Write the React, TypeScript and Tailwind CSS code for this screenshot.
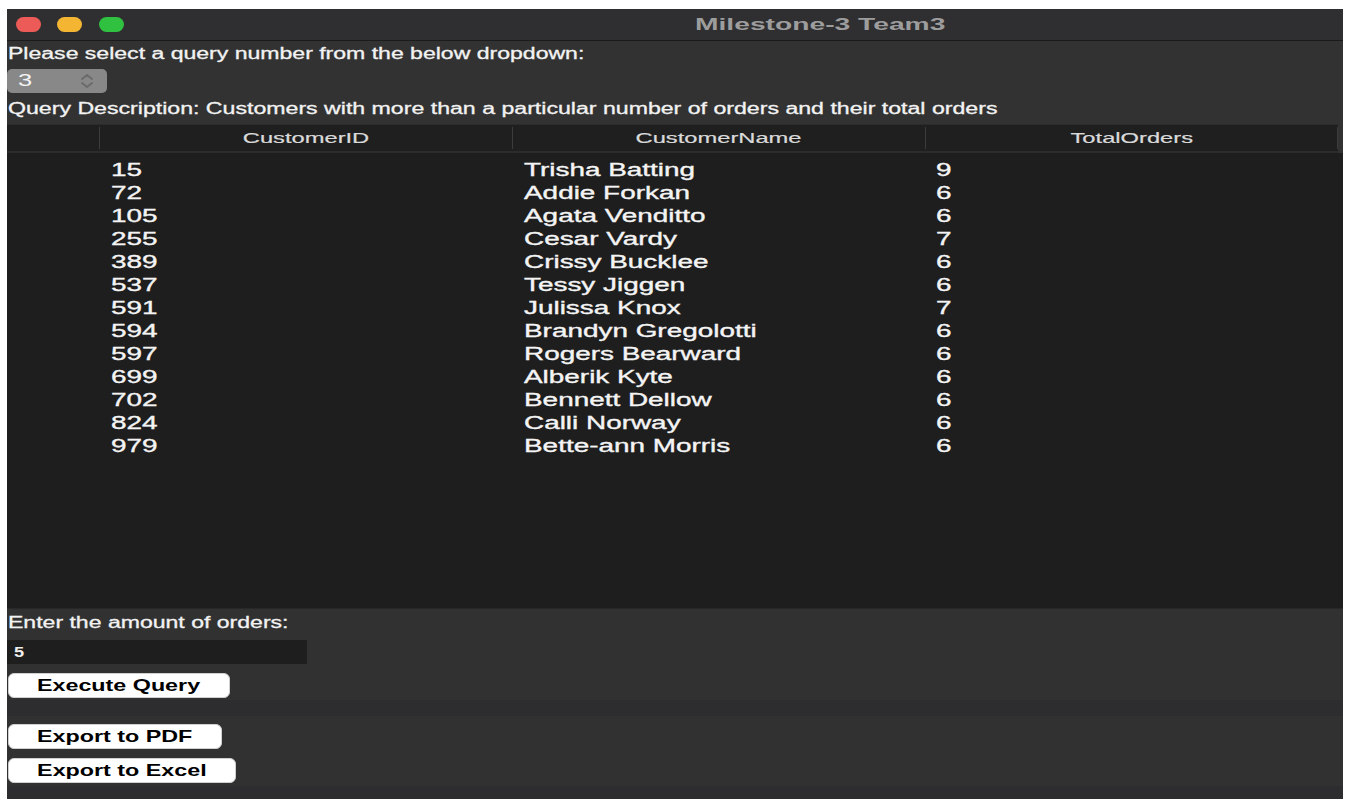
const ROWS = [
  { id: "15", name: "Trisha Batting", total: "9" },
  { id: "72", name: "Addie Forkan", total: "6" },
  { id: "105", name: "Agata Venditto", total: "6" },
  { id: "255", name: "Cesar Vardy", total: "7" },
  { id: "389", name: "Crissy Bucklee", total: "6" },
  { id: "537", name: "Tessy Jiggen", total: "6" },
  { id: "591", name: "Julissa Knox", total: "7" },
  { id: "594", name: "Brandyn Gregolotti", total: "6" },
  { id: "597", name: "Rogers Bearward", total: "6" },
  { id: "699", name: "Alberik Kyte", total: "6" },
  { id: "702", name: "Bennett Dellow", total: "6" },
  { id: "824", name: "Calli Norway", total: "6" },
  { id: "979", name: "Bette-ann Morris", total: "6" },
];

const FONT = "font-['Liberation_Sans',Arial,sans-serif]";

export default function App() {
  return (
    <div className={`h-[803px] w-[1352px] bg-white pl-[7px] pt-[9px] ${FONT}`}>
      <div className="flex h-[790px] w-[1336px] flex-col overflow-hidden bg-[#323232]">
        <TitleBar />
        <QueryPicker />
        <ResultsTable />
        <OrdersForm />
        <ExportButtons />
      </div>
    </div>
  );
}

/* -------------------- Title bar -------------------- */

function TitleBar() {
  return (
    <div className="flex h-[32px] shrink-0 items-center border-b border-[#1b1b1b] bg-[#2f2f31] pl-[9px]">
      <span className="h-[15px] w-[25px] rounded-full bg-[#ec5b57]" />
      <span className="ml-[16px] h-[15px] w-[25px] rounded-full bg-[#f4b533]" />
      <span className="ml-[17px] h-[15px] w-[25px] rounded-full bg-[#30c140]" />
      <span className="ml-[571px] inline-block origin-left scale-x-[1.66] whitespace-nowrap text-[17px] font-bold text-[#9d9d9d]">
        Milestone-3 Team3
      </span>
    </div>
  );
}

/* -------------------- Query picker -------------------- */

function QueryPicker() {
  return (
    <div className="flex shrink-0 flex-col">
      <div className="flex h-[26px] items-center pl-[1px]">
        <span className="inline-block origin-left scale-x-[1.44] whitespace-nowrap text-[16px] text-[#f2f2f2] [-webkit-text-stroke:0.3px_#f2f2f2]">
          Please select a query number from the below dropdown:
        </span>
      </div>
      <div className="mt-[2px] flex h-[24px] w-[100px] items-center justify-between rounded-[5px] bg-[#888888] pl-[11px] pr-[13px]">
        <span className="inline-block origin-left scale-x-[1.5] text-[17px] text-[#f4f4f4]">3</span>
        <svg viewBox="0 0 14 16" className="h-[16px] w-[14px]" fill="none" stroke="#6a6a6a" strokeWidth={1.8} strokeLinecap="round" strokeLinejoin="round">
          <path d="M2 6 L7 2 L12 6" />
          <path d="M2 10 L7 14 L12 10" />
        </svg>
      </div>
      <div className="flex h-[31px] items-center pl-[1px]">
        <span className="inline-block origin-left scale-x-[1.445] whitespace-nowrap text-[16px] text-[#f2f2f2] [-webkit-text-stroke:0.3px_#f2f2f2]">
          Query Description: Customers with more than a particular number of orders and their total orders
        </span>
      </div>
    </div>
  );
}

/* -------------------- Table -------------------- */

function HeaderCell({ label, last }: { label: string; last?: boolean }) {
  return (
    <div className={`flex h-full items-center justify-center ${last ? "w-[412px]" : "w-[413px]"}`}>
      <span className="inline-block origin-center scale-x-[1.58] whitespace-nowrap text-[15px] text-[#dadada] [-webkit-text-stroke:0.2px_#dadada]">
        {label}
      </span>
    </div>
  );
}

function Divider() {
  return <div className="h-[22px] w-px shrink-0 bg-[#3c3c3c]" />;
}

function ResultsTable() {
  return (
    <div className="flex flex-1 flex-col">
      <div className="flex h-[29px] w-[1331px] shrink-0 items-center border-b-2 border-t border-[#2c2c2c] bg-[#1f1f1f]">
        <div className="w-[92px]" />
        <Divider />
        <HeaderCell label="CustomerID" />
        <Divider />
        <HeaderCell label="CustomerName" />
        <Divider />
        <HeaderCell label="TotalOrders" last />
        <Divider />
      </div>
      <div className="flex-1 bg-[#1e1e1e] pt-[6px]">
        {ROWS.map((r) => (
          <div key={r.id} className="flex h-[23px] items-center text-[18px] text-[#f4f4f4] [-webkit-text-stroke:0.35px_#f4f4f4]">
            <div className="w-[93px]" />
            <div className="w-[413px] pl-[11px]">
              <span className="inline-block origin-left scale-x-[1.55] whitespace-nowrap">{r.id}</span>
            </div>
            <div className="w-[412px] pl-[11px]">
              <span className="inline-block origin-left scale-x-[1.55] whitespace-nowrap">{r.name}</span>
            </div>
            <div className="w-[412px] pl-[11px]">
              <span className="inline-block origin-left scale-x-[1.55] whitespace-nowrap">{r.total}</span>
            </div>
          </div>
        ))}
      </div>
    </div>
  );
}

/* -------------------- Orders form -------------------- */

function OrdersForm() {
  return (
    <div className="flex shrink-0 flex-col border-t border-[#282828] bg-[#313131] pb-[2px]">
      <div className="flex h-[27px] items-center pl-[1px]">
        <span className="inline-block origin-left scale-x-[1.44] whitespace-nowrap text-[16px] text-[#f2f2f2] [-webkit-text-stroke:0.3px_#f2f2f2]">
          Enter the amount of orders:
        </span>
      </div>
      <div className="mt-[4px] flex h-[24px] w-[300px] items-center bg-[#1e1e1e] pl-[7px]">
        <span className="inline-block origin-left scale-x-[1.3] text-[14px] font-bold text-[#eeeeee]">5</span>
      </div>
      <PushButton label="Execute Query" className="mt-[9px] w-[222px]" />
    </div>
  );
}

function ExportButtons() {
  return (
    <div className="flex shrink-0 flex-col">
      <div className="h-[16px] bg-[#2d2d2f]" />
      <div className="flex flex-col bg-[#313131] pb-[3px] pt-[8px]">
        <PushButton label="Export to PDF" className="w-[214px]" />
        <PushButton label="Export to Excel" className="mt-[9px] w-[228px]" />
      </div>
      <div className="h-[13px] bg-[#2d2d2f]" />
    </div>
  );
}

function PushButton({ label, className }: { label: string; className?: string }) {
  return (
    <button
      className={`ml-[1px] flex h-[25px] items-center justify-center rounded-[6px] border border-[#d0d0d0] bg-white ${className ?? ""}`}
    >
      <span className="inline-block origin-center scale-x-[1.37] whitespace-nowrap text-[17px] font-bold text-black">
        {label}
      </span>
    </button>
  );
}
